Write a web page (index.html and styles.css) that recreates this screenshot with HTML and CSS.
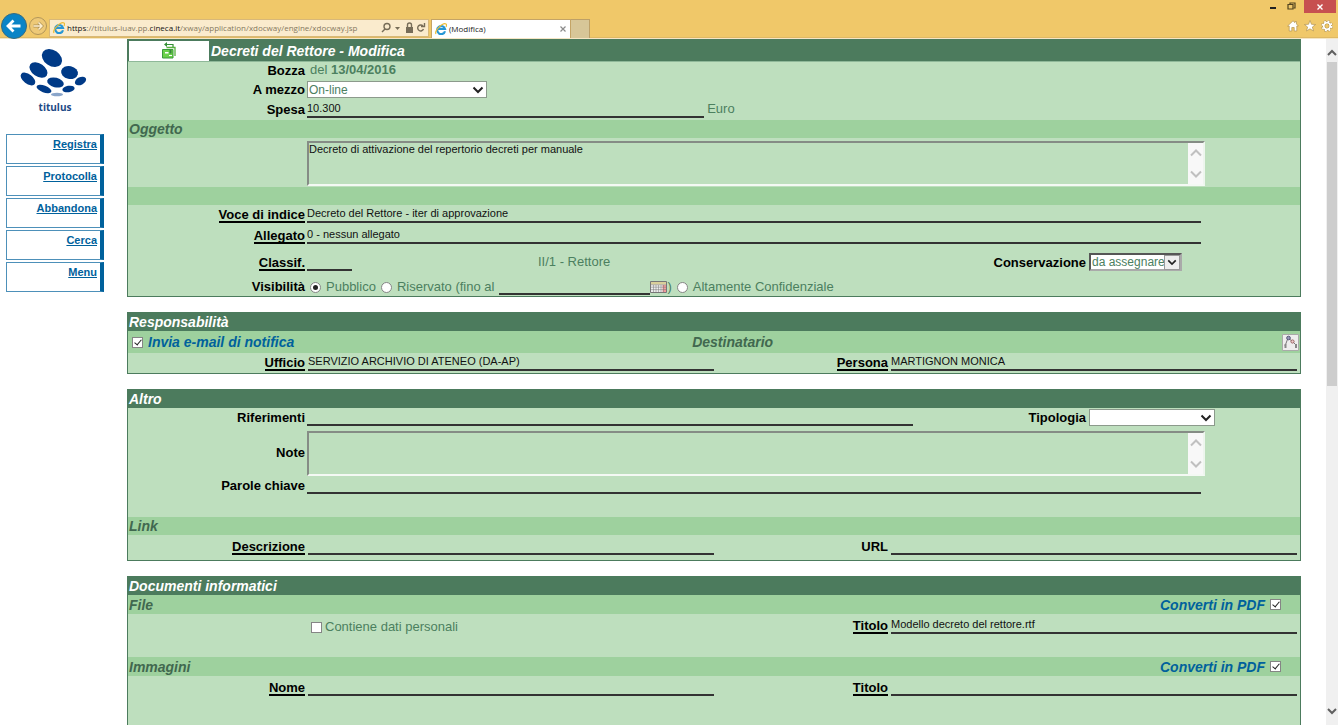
FILE: index.html
```html
<!DOCTYPE html>
<html lang="it">
<head>
<meta charset="utf-8">
<title>(Modifica)</title>
<link rel="stylesheet" href="styles.css">
</head>
<body>
<header class="chrome">
  <div class="nav">
    <button class="plain" aria-label="Indietro"><svg width="28" height="26" viewBox="0 0 28 26"><circle cx="14" cy="13" r="12.5" fill="#0a84c6" stroke="#356b80"/><path d="M20.500 13H8.500M13.500 7.500l-5.500 5.500 5.500 5.500" fill="none" stroke="#fff" stroke-width="2.800"/></svg></button>
    <button class="plain" aria-label="Avanti"><svg width="20" height="20" viewBox="0 0 20 20"><circle cx="10" cy="10" r="8.500" fill="#eec977" stroke="#b2965a"/><path d="M5.500 10h8M10.500 6.500l3.500 3.500-3.500 3.500" fill="none" stroke="#a98d52" stroke-width="2.800"/><path d="M5.500 10h8M10.500 6.500l3.500 3.500-3.500 3.500" fill="none" stroke="#fff0cf" stroke-width="1.500"/></svg></button>
  </div>
  <div class="address">
    <svg width="12" height="12" viewBox="0 0 12 12"><path d="M10 8.200A4 4 0 1 1 10 6H3" fill="none" stroke="#2797d5" stroke-width="2.200"/><path d="M1 11C-1 8 8-1 11 1c1 .8.500 2 0 3" fill="none" stroke="#edbc35" stroke-width="1.200"/></svg>
    <span class="url"><b>https</b>://titulus-iuav.pp.<b>cineca.it</b>/xway/application/xdocway/engine/xdocway.jsp</span>
    <svg width="46" height="14" viewBox="0 0 46 14" fill="none" stroke="#776d58" stroke-width="1.400"><circle cx="7" cy="5.500" r="3"/><path d="M5 8l-3 3"/><path d="M15 6h5l-2.500 3z" fill="#776d58" stroke="none"/><path d="M26 6h7v6h-7z" fill="#776d58" stroke="none"/><path d="M27.500 6V4a2 2 0 0 1 4 0v2"/><path d="M43 5a3 3 0 1 0 .5 3"/><path d="M41 5.500h3.500V2" /></svg>
  </div>
  <div class="tab">
    <svg width="12" height="12" viewBox="0 0 12 12"><path d="M10 8.200A4 4 0 1 1 10 6H3" fill="none" stroke="#2797d5" stroke-width="2.200"/><path d="M1 11C-1 8 8-1 11 1c1 .8.500 2 0 3" fill="none" stroke="#edbc35" stroke-width="1.200"/></svg>
    <span>(Modifica)</span>
    <button class="plain tab-close" aria-label="Chiudi scheda"><svg width="8" height="8" viewBox="0 0 8 8"><path d="M1.500 1.500l5 5M6.500 1.500l-5 5" stroke="#8c8c8c" stroke-width="1.200"/></svg></button>
  </div>
  <button class="new-tab" aria-label="Nuova scheda"></button>
  <div class="window">
    <div class="window-buttons">
      <button class="plain" aria-label="Riduci"><svg width="10" height="13" viewBox="0 0 10 13"><path d="M2 8h6" stroke="#222" stroke-width="2"/></svg></button>
      <button class="plain" aria-label="Ripristina"><svg width="10" height="13" viewBox="0 0 10 13" fill="none" stroke="#51431f" stroke-width="1.200"><path d="M2 4.500h5v4.500H2z"/><path d="M4 4V3h5v5H7.500"/></svg></button>
      <button class="plain close" aria-label="Chiudi"><svg width="8" height="8" viewBox="0 0 8 8"><path d="M1.500 1.500l5 5M6.500 1.500l-5 5" stroke="#fff" stroke-width="1.400"/></svg></button>
    </div>
    <div class="tools">
      <button class="plain" aria-label="Home"><svg width="12" height="12" viewBox="0 0 12 12"><path d="M6 .8L.6 6h1.600v5h2.600V7.500h2.400V11h2.600V6h1.600L9.500 4V1.500H8v1.200z" fill="#fff" stroke="#b39450" stroke-width=".7"/></svg></button>
      <button class="plain" aria-label="Preferiti"><svg width="12" height="12" viewBox="0 0 12 12"><path d="M6 .5l1.500 3.800 4.100.2-3.200 2.500 1.100 4L6 8.800 2.500 11l1.100-4L.4 4.500l4.100-.2z" fill="#fff" stroke="#b39450" stroke-width=".7"/></svg></button>
      <button class="plain" aria-label="Strumenti"><svg width="12" height="12" viewBox="0 0 12 12" fill="none"><circle cx="6" cy="6" r="4.700" stroke="#a98b48" stroke-width="2.400" stroke-dasharray="2.200 1.490"/><circle cx="6" cy="6" r="3.400" stroke="#a98b48" stroke-width="3"/><circle cx="6" cy="6" r="4.700" stroke="#fff" stroke-width="1.600" stroke-dasharray="1.900 1.790"/><circle cx="6" cy="6" r="3.300" stroke="#fff" stroke-width="1.800"/></svg></button>
    </div>
  </div>
</header>

<div class="page">
  <aside class="sidebar">
    <svg class="logo" width="76" height="56" viewBox="16 44 76 56" fill="#003a87">
      <ellipse cx="52" cy="58" rx="11" ry="8" transform="rotate(35 52 58)"/>
      <ellipse cx="38.500" cy="70" rx="10" ry="6.500" transform="rotate(35 38.500 70)"/>
      <ellipse cx="69.500" cy="72.500" rx="8.500" ry="6.500" transform="rotate(12 69.500 72.500)"/>
      <ellipse cx="28" cy="79" rx="8.500" ry="4.800" transform="rotate(37 28 79)"/>
      <ellipse cx="55.500" cy="82.500" rx="8.500" ry="4.800" transform="rotate(14 55.500 82.500)"/>
      <ellipse cx="80.500" cy="81" rx="6" ry="3.800" transform="rotate(-27 80.500 81)"/>
      <ellipse cx="44" cy="89" rx="7.800" ry="3.400" transform="rotate(20 44 89)"/>
      <ellipse cx="68.500" cy="89" rx="6.200" ry="3.200" transform="rotate(-10 68.500 89)"/>
      <ellipse cx="57" cy="94.500" rx="6" ry="1.800" fill="#8aa5ca"/>
    </svg>
    <div class="brand">titulus</div>
    <nav class="menu">
      <a href="#">Registra</a>
      <a href="#">Protocolla</a>
      <a href="#">Abbandona</a>
      <a href="#">Cerca</a>
      <a href="#">Menu</a>
    </nav>
  </aside>

  <main class="content">
    <section class="panel">
      <div class="head head-main">
        <button class="head-tool" aria-label="Ripeti"><svg width="16" height="18" viewBox="0 0 16 18"><path d="M5.500 5.500H14V14" fill="none" stroke="#57b13d" stroke-width="1.300"/><path d="M4 2.500h8V5" fill="none" stroke="#348f35" stroke-width="1.200"/><path d="M3 2.500L6 0v5z" fill="#348f35"/><path d="M1.500 7.500H12V16H1.500z" fill="#6bd14a" stroke="#3a9a38"/><path d="M4 10h3.500v1.500H4zM8 13h3v1H8z" fill="#fff"/><path d="M8.500 8h2v3.500h-2z" fill="#37863a"/></svg></button>
        <h1>Decreti del Rettore - Modifica</h1>
      </div>
      <div class="row">
        <span class="label">Bozza</span>
        <span class="text lead">del <b>13/04/2016</b></span>
      </div>
      <div class="row">
        <label class="label" for="mezzo">A mezzo</label>
        <div class="select mezzo"><select id="mezzo"><option>On-line</option></select><svg class="arrow" width="12" height="8" viewBox="0 0 12 8"><path d="M1.500 1.500L6 6l4.500-4.500" /></svg></div>
      </div>
      <div class="row roomy">
        <label class="label" for="spesa">Spesa</label>
        <div class="field"><input id="spesa" class="line w40" value="10.300"><span class="text">Euro</span></div>
      </div>
      <div class="band"><h2>Oggetto</h2></div>
      <div class="row tall">
        <span class="label"></span>
        <div class="area"><textarea aria-label="Oggetto">Decreto di attivazione del repertorio decreti per manuale</textarea><div class="area-bar"><svg width="12" height="8" viewBox="0 0 12 8"><path d="M1 6.500L6 1.500l5 5"/></svg><svg width="12" height="8" viewBox="0 0 12 8"><path d="M1 1.500l5 5 5-5"/></svg></div></div>
      </div>
      <div class="band"></div>
      <div class="row roomy">
        <label class="label" for="voce"><a href="#">Voce di indice</a></label>
        <div class="field"><input id="voce" class="line w90" value="Decreto del Rettore - iter di approvazione"></div>
      </div>
      <div class="row medium">
        <label class="label" for="allegato"><a href="#">Allegato</a></label>
        <div class="field"><input id="allegato" class="line w90" value="0 - nessun allegato"></div>
      </div>
      <div class="row high">
        <label class="label" for="classif"><a href="#">Classif.</a></label>
        <div class="field">
          <input id="classif" class="line code">
          <span class="text class-name">II/1 - Rettore</span>
          <label class="label-end" for="conserva">Conservazione</label>
          <div class="slot"><div class="select boxed"><select id="conserva"><option>da assegnare</option></select><svg class="arrow" width="10" height="7" viewBox="0 0 12 8"><path d="M1.500 1.500L6 6l4.500-4.500"/></svg></div></div>
        </div>
      </div>
      <div class="row radios">
        <span class="label">Visibilità</span>
        <div class="field options">
          <input type="radio" name="vis" id="pub" checked><label for="pub">Pubblico</label>
          <input type="radio" name="vis" id="ris"><label for="ris">Riservato (fino al</label>
          <input class="line date" aria-label="Fino al">
          <button class="plain" aria-label="Calendario"><svg width="17" height="12" viewBox="0 0 17 12"><path d="M.5.500h16v11H.5z" fill="#eee" stroke="#777"/><path d="M1 1h15v2.500H1z" fill="#d9cf9a"/><path d="M12.500 4H16v7h-3.500z" fill="#f59a9a"/><path d="M1 3.800h15M1 6.200h15M1 8.600h15M3.500 4v7M6 4v7M8.500 4v7M11 4v7M13.500 4v7" stroke="#777" stroke-width=".5"/></svg></button><span>)</span>
          <input type="radio" name="vis" id="alt"><label for="alt">Altamente Confidenziale</label>
        </div>
      </div>
    </section>

    <section class="panel">
      <div class="head"><h2>Responsabilità</h2></div>
      <div class="band notify">
        <label class="check"><input type="checkbox" checked><span>Invia e-mail di notifica</span></label>
        <h3>Destinatario</h3>
        <button class="plain org" aria-label="Organigramma"><svg width="17" height="17" viewBox="0 0 17 17"><path d="M.5.500h16v16H.5z" fill="#eee" stroke="#aaa"/><path d="M3 12L6 4l4 3 5 5" fill="none" stroke="#777"/><circle cx="6.500" cy="4" r="1.800" fill="#99b" stroke="#557"/><circle cx="10.500" cy="7.500" r="1.600" fill="#ecc" stroke="#966"/><path d="M2.500 10h2v4h-2zM13 10h2v4h-2z" fill="#888"/></svg></button>
      </div>
      <div class="row pair roomy">
        <label class="label" for="ufficio"><a href="#">Ufficio</a></label>
        <input id="ufficio" class="line" value="SERVIZIO ARCHIVIO DI ATENEO (DA-AP)">
        <label class="label" for="persona"><a href="#">Persona</a></label>
        <input id="persona" class="line" value="MARTIGNON MONICA">
      </div>
    </section>

    <section class="panel">
      <div class="head"><h2>Altro</h2></div>
      <div class="row roomy">
        <label class="label" for="rif">Riferimenti</label>
        <div class="field"><input id="rif" class="line w61">
          <label class="label-end" for="tipo">Tipologia</label>
          <div class="slot"><div class="select tipo"><select id="tipo"><option></option></select><svg class="arrow" width="12" height="8" viewBox="0 0 12 8"><path d="M1.500 1.500L6 6l4.500-4.500"/></svg></div></div>
        </div>
      </div>
      <div class="row tall">
        <label class="label" for="note">Note</label>
        <div class="area"><textarea id="note"></textarea><div class="area-bar"><svg width="12" height="8" viewBox="0 0 12 8"><path d="M1 6.500L6 1.500l5 5"/></svg><svg width="12" height="8" viewBox="0 0 12 8"><path d="M1 1.500l5 5 5-5"/></svg></div></div>
      </div>
      <div class="row after">
        <label class="label" for="chiave">Parole chiave</label>
        <div class="field"><input id="chiave" class="line w90"></div>
      </div>
      <div class="band"><h2>Link</h2></div>
      <div class="row pair link-row">
        <label class="label" for="descr"><a href="#">Descrizione</a></label>
        <input id="descr" class="line">
        <label class="label" for="url">URL</label>
        <input id="url" class="line">
      </div>
    </section>

    <section class="panel">
      <div class="head"><h2>Documenti informatici</h2></div>
      <div class="band split"><h2>File</h2><label class="check"><span>Converti in PDF</span><input type="checkbox" checked></label></div>
      <div class="row pair doc after">
        <span class="label"></span>
        <label class="check-text"><input type="checkbox"><span>Contiene dati personali</span></label>
        <label class="label" for="titolo1"><a href="#">Titolo</a></label>
        <input id="titolo1" class="line" value="Modello decreto del rettore.rtf">
      </div>
      <div class="band split"><h2>Immagini</h2><label class="check"><span>Converti in PDF</span><input type="checkbox" checked></label></div>
      <div class="row pair doc after last">
        <label class="label" for="nome"><a href="#">Nome</a></label>
        <input id="nome" class="line">
        <label class="label" for="titolo2"><a href="#">Titolo</a></label>
        <input id="titolo2" class="line">
      </div>
    </section>
  </main>

  <div class="scrollbar">
    <svg width="12" height="8" viewBox="0 0 12 8"><path d="M2 6l4-4 4 4"/></svg>
    <div class="thumb"></div>
    <svg width="12" height="8" viewBox="0 0 12 8"><path d="M2 2l4 4 4-4"/></svg>
  </div>
</div>
</body>
</html>
```

FILE: styles.css
```css
* { box-sizing: border-box; }

body {
  margin: 0;
  height: 100vh;
  display: flex;
  flex-direction: column;
  overflow: hidden;
  background: #fff;
  font: 13px/14px "Liberation Sans", Arial, sans-serif;
  color: #4c805f;
}

h1, h2, h3 {
  margin: 0;
  font-size: 14px;
  line-height: 18px;
  font-style: italic;
  font-weight: bold;
}

input, select, textarea, button { font-family: inherit; margin: 0; }
svg { display: block; flex: none; }
.plain { border: 0; padding: 0; background: none; }

/* Browser window bar */
.chrome {
  flex: none;
  display: flex;
  align-items: flex-end;
  height: 39px;
  background: #f0c869;
  border-bottom: 1px solid #f5e6c4;
  box-shadow: inset 0 -1px #dfb964;
  font: 8px/12px "Open Sans", "Noto Sans", sans-serif;
}
.nav { display: flex; align-items: center; width: 49px; height: 25px; }
.address {
  display: flex;
  align-items: center;
  width: 380px;
  height: 18px;
  margin-bottom: 1px;
  padding: 0 2px 0 3px;
  gap: 2px;
  background: #faebcd;
  border: 1px solid #d8b878;
}
.url { flex: 1; white-space: nowrap; color: #85795f; }
.url b { font-weight: normal; color: #111; }
.tab {
  display: flex;
  align-items: center;
  gap: 2px;
  width: 140px;
  height: 19px;
  margin-left: 2px;
  padding: 0 3px;
  background: #fff;
  border: 1px solid #c4a466;
  border-bottom: 0;
  color: #222;
}
.tab-close { margin-left: auto; }
.new-tab {
  width: 19px;
  height: 19px;
  background: #d7c698;
  border: 1px solid #bda067;
  border-width: 1px 1px 0 0;
}
.window {
  margin-left: auto;
  align-self: stretch;
  display: flex;
  flex-direction: column;
  align-items: flex-end;
  justify-content: space-between;
}
.window-buttons { display: flex; gap: 8px; padding-right: 2px; }
.close {
  display: flex;
  align-items: center;
  justify-content: center;
  width: 32px;
  height: 13px;
  background: #c75050;
}
.tools { display: flex; gap: 5px; padding: 0 5px 6px 0; }

/* Page frame */
.page { flex: 1; display: flex; min-height: 0; }
.sidebar { flex: none; width: 127px; padding: 5px 0 0 6px; }
.logo { margin-left: 10px; }
.brand {
  width: 98px;
  margin-bottom: 20px;
  text-align: center;
  font: bold 10px/14px "Open Sans", "Noto Sans", sans-serif;
  color: #1d4a86;
}
.menu { display: flex; flex-direction: column; gap: 2px; width: 98px; }
.menu a {
  height: 30px;
  padding: 2px 3px 0 0;
  border: 1px solid #4d90b9;
  border-right: 4px solid #00619c;
  text-align: right;
  font-size: 11px;
  font-weight: bold;
  color: #00619c;
}
.content {
  flex: 1;
  min-width: 0;
  overflow: hidden;
  display: flex;
  flex-direction: column;
  gap: 15px;
}
.scrollbar {
  flex: none;
  display: flex;
  flex-direction: column;
  width: 12px;
  margin-left: 25px;
  padding: 10px 0;
  background: #f0f0f0;
}
.scrollbar path { fill: none; stroke: #606060; stroke-width: 2; }
.thumb { height: 324px; margin: 5px 1px auto; background: #cdcdcd; }

/* Panels */
.panel {
  flex: none;
  border: 1px solid #4c7b5d;
  background: #bedfbe;
}
.head { padding-left: 1px; background: #4c7b5d; color: #fff; }
.head-main {
  display: flex;
  align-items: center;
  gap: 2px;
  height: 22px;
  border-bottom: 1px solid #8fb899;
}
.head-tool {
  display: flex;
  align-items: center;
  justify-content: center;
  width: 80px;
  height: 20px;
  padding: 0;
  border: 0;
  background: #fff;
}
.band {
  min-height: 18px;
  padding-left: 1px;
  background: #9ed19e;
  color: #41684f;
}
.split, .check { display: flex; align-items: center; }
.split { min-height: 19px; justify-content: space-between; padding-right: 19px; }
.check { gap: 5px; font-size: 14px; font-weight: bold; font-style: italic; color: #00619c; }
.notify {
  display: grid;
  grid-template-columns: 48% 1fr auto;
  align-items: center;
  min-height: 22px;
  padding: 0 1px 0 4px;
}

/* Form rows: label column, then the field */
.row {
  display: flex;
  align-items: flex-end;
  gap: 2px;
  min-height: 19px;
  padding-bottom: 2px;
}
.row.roomy { min-height: 20px; }
.row.medium { min-height: 21px; }
.row.high { min-height: 27px; }
.row.radios { min-height: 23px; padding-bottom: 1px; }
.row.tall { min-height: 49px; align-items: center; padding: 3px 0 1px; }
.row.after { margin-bottom: 21px; }
.label {
  flex: none;
  width: 177px;
  text-align: right;
  border-bottom: 1px solid transparent;
}
.label, .label-end { font-weight: bold; color: #000; white-space: nowrap; }
.label a {
  display: inline-block;
  height: 15px;
  margin-bottom: -1px;
  border-bottom: 2px solid #000;
  color: inherit;
  text-decoration: none;
  vertical-align: top;
}
.pair {
  display: grid;
  grid-template-columns: 177px 1fr 171px 1fr;
  gap: 3px;
  align-items: end;
  padding-right: 3px;
}
.pair .label { width: auto; }
.pair.link-row { min-height: 25px; padding-bottom: 5px; }
.pair.doc { min-height: 22px; }
.pair.last { margin-bottom: 40px; }
.text { padding-bottom: 2px; }
.lead { padding-left: 3px; }
.field { flex: 1; min-width: 0; display: flex; align-items: flex-end; gap: 3px; }
.line {
  min-width: 0;
  width: 100%;
  height: 16px;
  padding: 0 0 2px;
  border: 0;
  border-bottom: 2px solid #333;
  background: none;
  font-size: 11px;
  color: #111;
  outline: 0;
}
.w40 { width: 40%; }
.w61 { width: 61%; }
.w90 { width: 90%; }
.code { width: 45px; }
.class-name { margin-left: 183px; }
.label-end { margin-left: auto; padding-bottom: 1px; }
.slot { width: 211px; }

.select { position: relative; height: 17px; background: #fff; border: 1px solid #8c9a8c; }
.select select {
  width: 100%;
  height: 100%;
  padding: 0 1px;
  border: 0;
  background: none;
  appearance: none;
  font-size: 12px;
  color: #4c805f;
}
.arrow { position: absolute; right: 2px; top: 4px; fill: none; stroke: #222; stroke-width: 2; pointer-events: none; }
.mezzo { width: 180px; }
.tipo { width: 126px; }
.boxed { width: 93px; height: 18px; border: 2px inset #aaa; }
.boxed .arrow { box-sizing: content-box; right: 0; top: 0; padding: 3px 2px; background: #eee; border: 1px solid #999; }

.area {
  display: flex;
  width: calc(100% - 274px);
  height: 45px;
  border: 2px solid;
  border-color: #858c85 #eef5ee #f4f9f4 #858c85;
}
.area textarea {
  flex: 1;
  padding: 0;
  border: 0;
  background: none;
  resize: none;
  font-size: 11px;
  line-height: 13px;
  color: #111;
  outline: 0;
}
.area-bar {
  display: flex;
  flex-direction: column;
  justify-content: space-between;
  align-items: center;
  width: 15px;
  padding: 6px 0;
  background: #f8f8f8;
}
.area-bar path { fill: none; stroke: #c0c0c0; stroke-width: 2; }

input[type="checkbox"], input[type="radio"] {
  flex: none;
  display: grid;
  place-content: center;
  width: 11px;
  height: 11px;
  appearance: none;
  background: #fff;
  border: 1px solid #858585;
}
input[type="radio"] { border-radius: 50%; }
input[type="radio"]:checked::before { content: ""; width: 5px; height: 5px; border-radius: 50%; background: #222; }
input[type="checkbox"]:checked::before {
  content: "";
  width: 3px;
  height: 6px;
  margin-bottom: 2px;
  border: solid #222;
  border-width: 0 1px 1px 0;
  transform: rotate(40deg);
}
.options { align-items: center; gap: 5px; padding-left: 3px; }
.options .date { width: 151px; align-self: flex-end; }
.options .plain { margin: 0 -5px; }
.check-text { display: flex; align-items: center; gap: 3px; padding-left: 3px; }
```
